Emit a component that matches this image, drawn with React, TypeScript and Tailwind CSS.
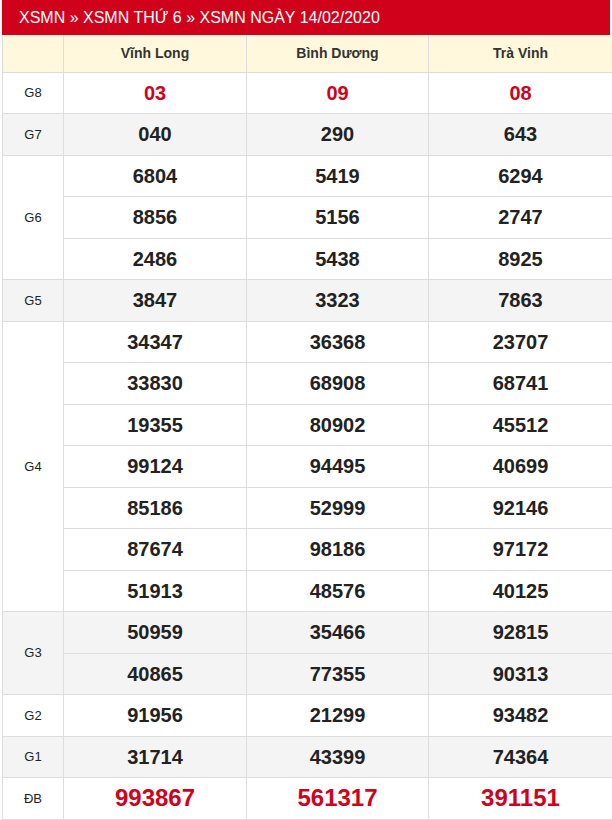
const rows: { label: string; values: string[][]; shaded: boolean; kind?: "red" | "db" }[] = [
  { label: "G8", values: [["03"], ["09"], ["08"]], shaded: false, kind: "red" },
  { label: "G7", values: [["040"], ["290"], ["643"]], shaded: true },
  {
    label: "G6",
    values: [
      ["6804", "8856", "2486"],
      ["5419", "5156", "5438"],
      ["6294", "2747", "8925"],
    ],
    shaded: false,
  },
  { label: "G5", values: [["3847"], ["3323"], ["7863"]], shaded: true },
  {
    label: "G4",
    values: [
      ["34347", "33830", "19355", "99124", "85186", "87674", "51913"],
      ["36368", "68908", "80902", "94495", "52999", "98186", "48576"],
      ["23707", "68741", "45512", "40699", "92146", "97172", "40125"],
    ],
    shaded: false,
  },
  {
    label: "G3",
    values: [
      ["50959", "40865"],
      ["35466", "77355"],
      ["92815", "90313"],
    ],
    shaded: true,
  },
  { label: "G2", values: [["91956"], ["21299"], ["93482"]], shaded: false },
  { label: "G1", values: [["31714"], ["43399"], ["74364"]], shaded: true },
  { label: "ĐB", values: [["993867"], ["561317"], ["391151"]], shaded: false, kind: "db" },
];

const provinces = ["Vĩnh Long", "Bình Dương", "Trà Vinh"];

export default function App() {
  return (
    <div className="w-[612px] h-[820px] bg-white pl-[2px] font-['Liberation_Sans',Arial,sans-serif]">
      <div className="h-[35px] w-[608px] bg-[#d0021b] text-white text-[16px] flex items-center pl-[17px]">
        XSMN » XSMN THỨ 6 » XSMN NGÀY 14/02/2020
      </div>
      <table className="w-[610px] border-collapse table-fixed">
        <colgroup>
          <col className="w-[61px]" />
          <col className="w-[183px]" />
          <col className="w-[182px]" />
          <col className="w-[184px]" />
        </colgroup>
        <thead>
          <tr className="h-[37px] bg-[#fff8dc]">
            <th className="border border-[#dddddd] border-t-0"></th>
            {provinces.map((p) => (
              <th key={p} className="border border-[#dddddd] border-t-0 text-[14px] font-bold text-[#333333] text-center">
                {p}
              </th>
            ))}
          </tr>
        </thead>
        <tbody>
          {rows.flatMap((r) => {
            const n = r.values[0].length;
            return Array.from({ length: n }, (_, i) => (
              <tr key={r.label + i} className={`h-[41.5px] ${r.shaded ? "bg-[#f4f4f4]" : "bg-white"}`}>
                {i === 0 && (
                  <td rowSpan={n} className="border border-[#dddddd] text-center text-[13px] text-[#222222]">
                    {r.label}
                  </td>
                )}
                {r.values.map((col, c) => (
                  <td
                    key={c}
                    className={`border border-[#dddddd] text-center font-bold ${
                      r.kind === "db"
                        ? "text-[24px] text-[#d0021b]"
                        : r.kind === "red"
                        ? "text-[20px] text-[#d0021b]"
                        : "text-[20px] text-[#222222]"
                    }`}
                  >
                    {col[i]}
                  </td>
                ))}
              </tr>
            ));
          })}
        </tbody>
      </table>
    </div>
  );
}
